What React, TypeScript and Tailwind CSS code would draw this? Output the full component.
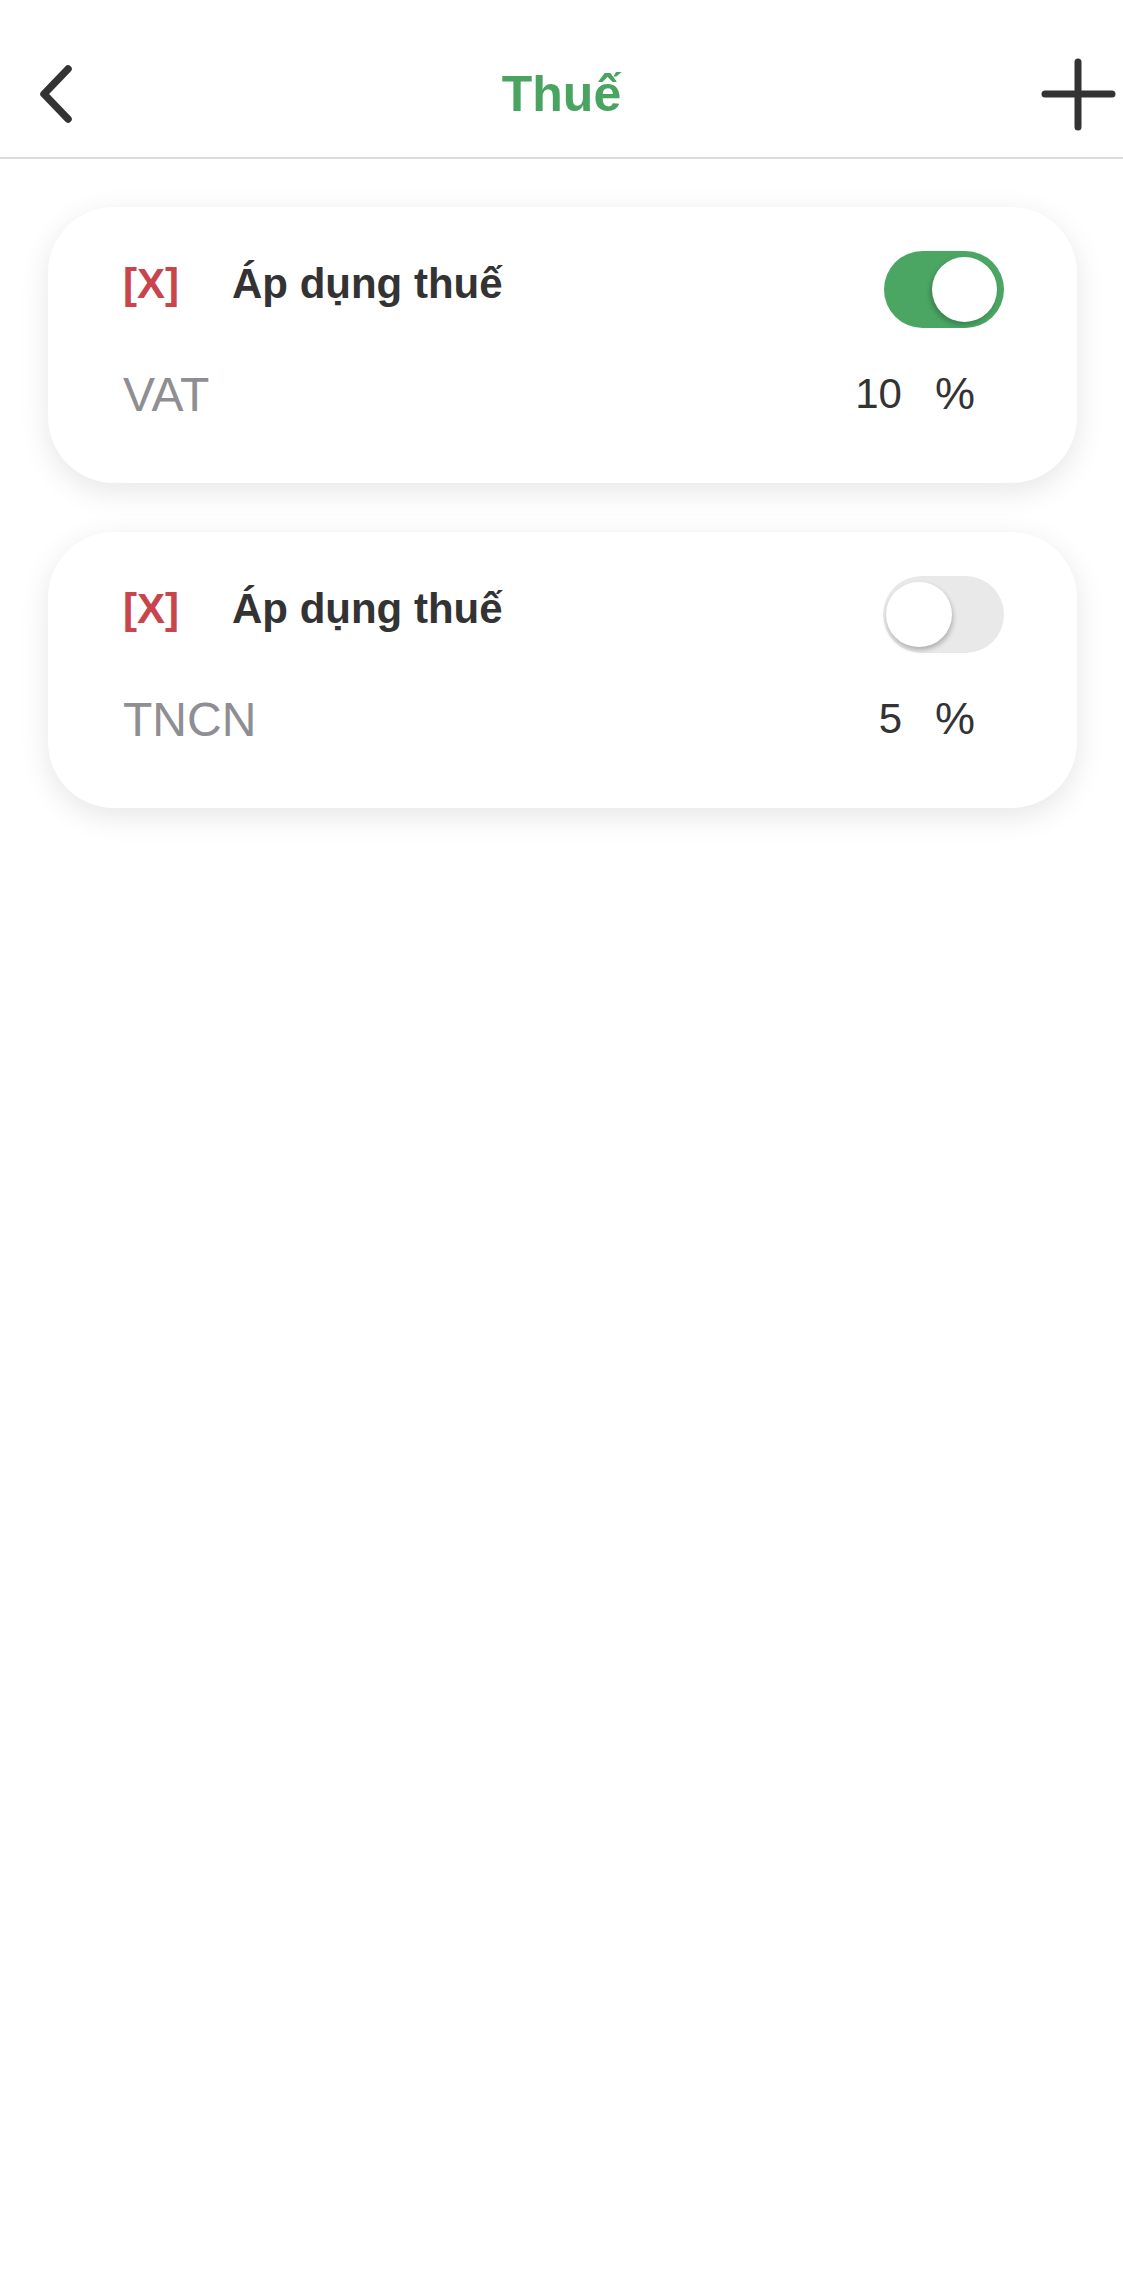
import React from "react";

const font = { fontFamily: '"Liberation Sans", Arial, sans-serif' };

function Toggle({ on }: { on: boolean }) {
  return (
    <div
      className={
        on
          ? "relative w-[120px] h-[77px] rounded-full bg-[#4ba664] shrink-0"
          : "relative w-[121px] h-[77px] rounded-full bg-[#e9e9ea] shrink-0"
      }
    >
      <div
        className={
          on
            ? "absolute top-[6px] right-[7px] w-[65px] h-[65px] rounded-full bg-white shadow-[-2px_3px_5px_rgba(0,0,0,0.22)]"
            : "absolute top-[6px] left-[3px] w-[66px] h-[65px] rounded-full bg-white shadow-[1px_3px_5px_rgba(0,0,0,0.25)]"
        }
      />
    </div>
  );
}

function TaxCard({ name, value, on }: { name: string; value: string; on: boolean }) {
  return (
    <div className="h-[276px] rounded-[66px] bg-white shadow-[0_8px_30px_rgba(0,0,0,0.10)] pl-[75px] pr-[73px] pt-[44px]">
      <div className="flex items-center h-[77px]">
        <span className="text-[42px] leading-none font-bold text-[#c9454d] -mt-[11px]">[X]</span>
        <span className="ml-[53px] text-[42px] leading-none font-bold text-[#333333] -mt-[11px]">
          Áp dụng thuế
        </span>
        <div className="ml-auto">
          <Toggle on={on} />
        </div>
      </div>
      <div className="flex items-center h-[48px] mt-[43px]">
        <span className="text-[48px] leading-none text-[#8e8e93]">{name}</span>
        <span className="ml-auto text-[42px] leading-none text-[#333333] -mt-[3px]">{value}</span>
        <span className="ml-[33px] mr-[29px] text-[45px] leading-none text-[#333333] -mt-[3px]">%</span>
      </div>
    </div>
  );
}

export default function App() {
  return (
    <div className="min-h-[2275px] bg-white" style={font}>
      <div className="h-[159px] pt-[30px] flex items-center border-b-2 border-[#dcdcdc]">
        <div className="w-[120px] pl-[36px] flex items-center">
          <svg width="44" height="62" viewBox="0 0 44 62" fill="none">
            <path
              d="M32 6 L8 31 L32 56"
              stroke="#333333"
              strokeWidth="7.5"
              strokeLinecap="round"
              strokeLinejoin="round"
            />
          </svg>
        </div>
        <div className="flex-1 text-center text-[50px] leading-none font-bold text-[#4aa461]">Thuế</div>
        <div className="w-[120px] flex justify-end pr-[4px]">
          <svg width="80" height="80" viewBox="0 0 80 80" fill="none">
            <path
              d="M6 40 L73 40 M39 8 L39 73"
              stroke="#333333"
              strokeWidth="7"
              strokeLinecap="round"
            />
          </svg>
        </div>
      </div>
      <div className="pr-[46px] pl-[48px] pt-[48px] flex flex-col gap-[49px]">
        <TaxCard name="VAT" value="10" on={true} />
        <TaxCard name="TNCN" value="5" on={false} />
      </div>
    </div>
  );
}
